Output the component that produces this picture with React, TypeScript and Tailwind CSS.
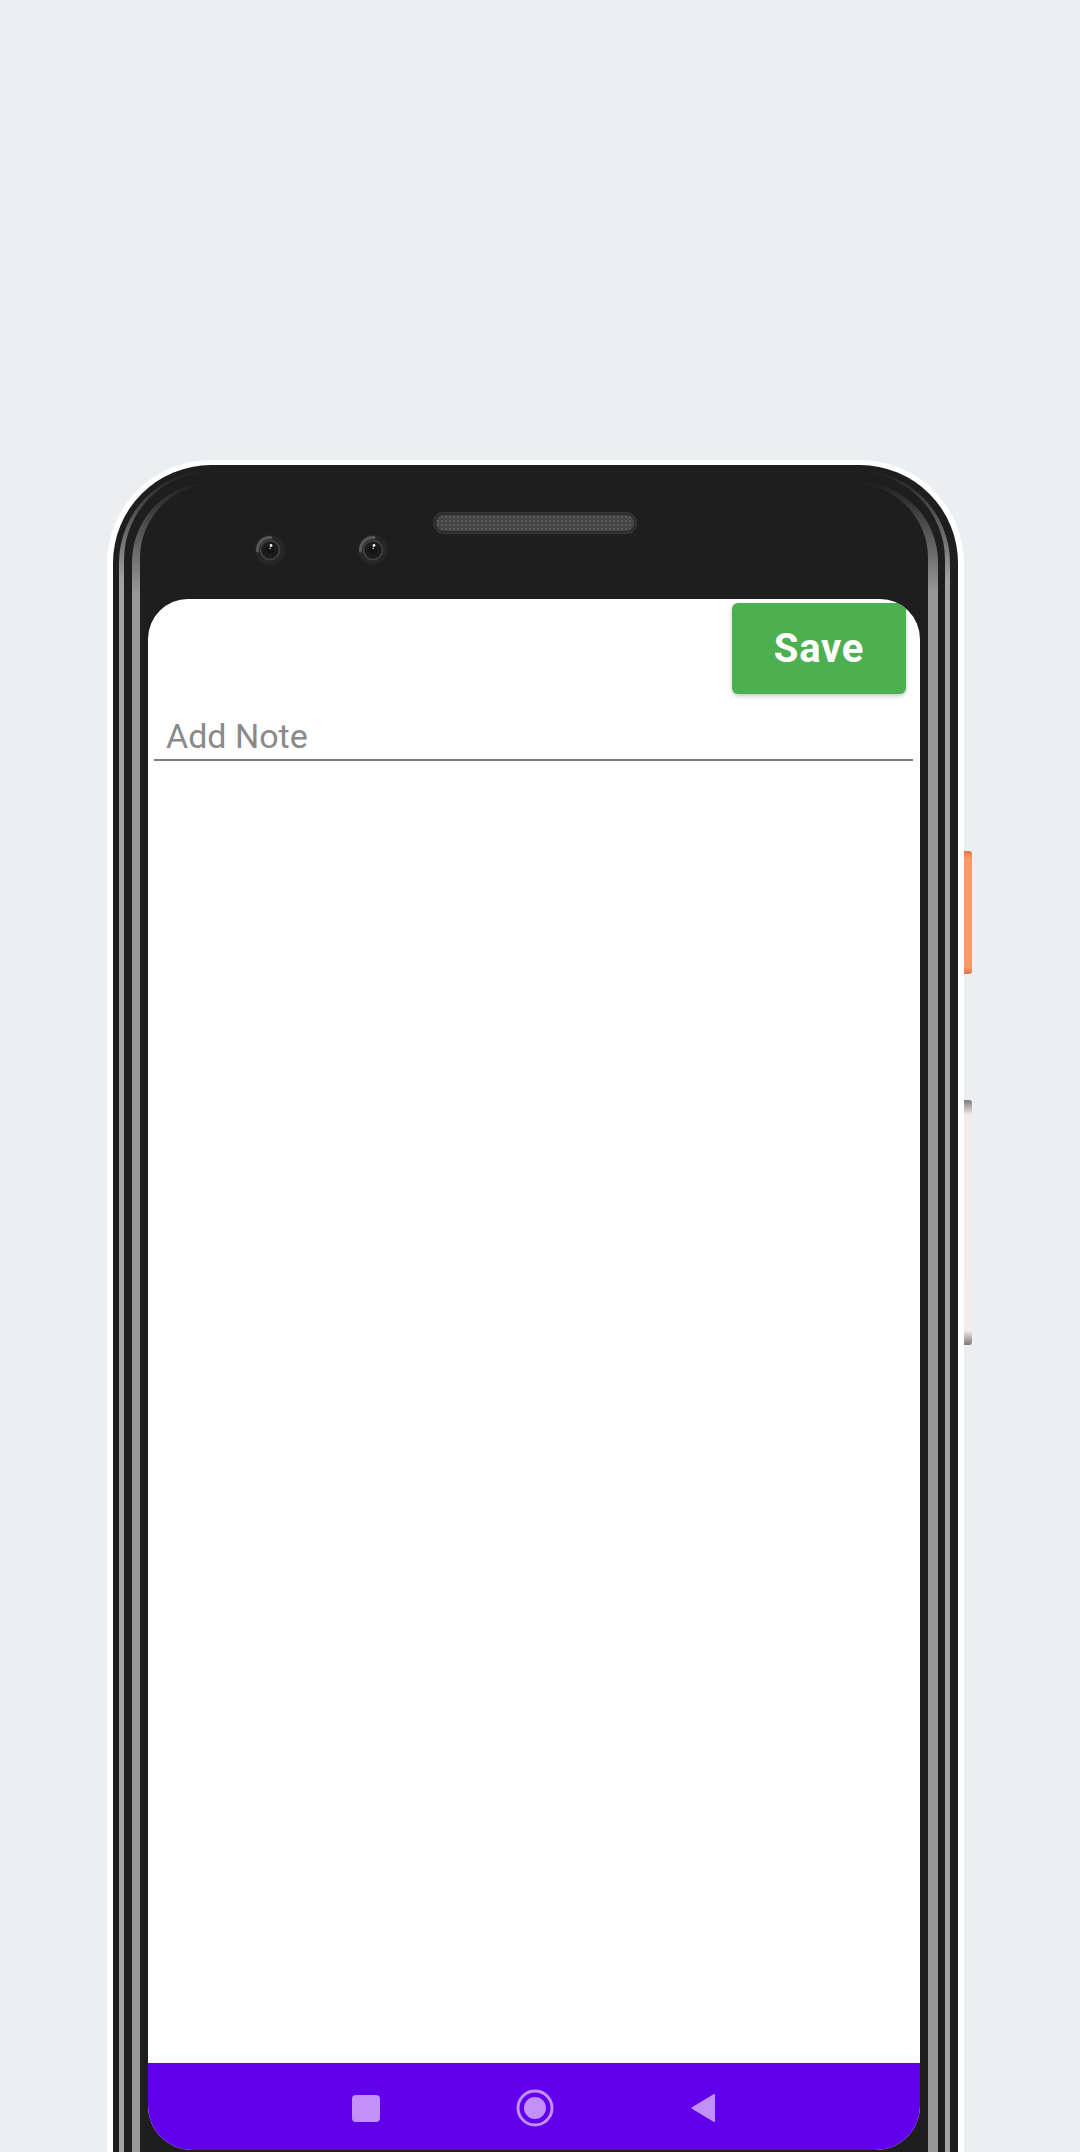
import React from "react";

function Camera() {
  return (
    <svg width="32" height="32" viewBox="0 0 32 32">
      <circle cx="16" cy="16" r="15" fill="#262626" />
      <path d="M3.5 17 A12.5 12.5 0 0 1 17 3.5" stroke="#575757" strokeWidth="3" fill="none" strokeLinecap="round" />
      <circle cx="16" cy="16" r="9.5" fill="#1c1c1c" stroke="#444444" strokeWidth="1.6" />
      <circle cx="16" cy="16" r="4" fill="#141414" />
      <circle cx="17" cy="11.5" r="1.4" fill="#ebebeb" />
      <circle cx="16.2" cy="14.3" r="0.9" fill="#a8a8a8" />
    </svg>
  );
}

function NavBar() {
  return (
    <div className="flex h-[87px] items-center justify-center gap-[136px] bg-[#6200ee] pt-[3px]">
      <div className="h-[27px] w-[28px] rounded-[4px] bg-[#c191f7]" />
      <svg width="38" height="38" viewBox="0 0 38 38">
        <circle cx="19" cy="19" r="17" fill="none" stroke="#c191f7" strokeWidth="3" />
        <circle cx="19" cy="19" r="11" fill="#c191f7" />
      </svg>
      <svg width="26" height="30" viewBox="0 0 26 30">
        <polygon points="24,2 24,28 2.5,15" fill="#c191f7" stroke="#c191f7" strokeWidth="2" strokeLinejoin="round" />
      </svg>
    </div>
  );
}

export default function App() {
  return (
    <div className="h-[2152px] w-[1080px] overflow-hidden bg-[#eceff1] pl-[107px] pt-[460px] font-['Roboto',sans-serif]">
      <div className="relative w-[857px] rounded-t-[104px] bg-white px-[6px] pt-[5px]">
        {/* side buttons */}
        <div className="absolute left-full top-[391px] h-[123px] w-[8px] rounded-r-[3px] bg-[linear-gradient(180deg,#d9784a_0%,#ff9966_6%,#ff9966_94%,#d9784a_100%)]" />
        <div className="absolute left-full top-[640px] h-[245px] w-[8px] rounded-r-[3px] bg-[linear-gradient(180deg,#7e7979_0%,#f1ecec_6%,#f3eeee_94%,#7e7979_100%)]" />

        <div className="rounded-t-[98px] bg-[#1e1e1e] pl-[6px] pr-[8px] pt-[5px]">
          <div className="rounded-t-[93px] bg-[linear-gradient(180deg,#1e1e1e_0px,#a2a2a2_110px)] px-[5px] pt-[2px]">
            <div className="rounded-t-[88px] bg-[#1e1e1e] pl-[8px] pr-[7px] pt-[10px]">
              <div className="rounded-t-[80px] bg-[linear-gradient(180deg,#1e1e1e_0px,#979797_110px)] pl-[8px] pr-[10px] pt-[2px]">
                <div className="rounded-t-[74px] bg-[#1e1e1e] px-[8px] pb-[40px]">
                  {/* top bezel */}
                  <div className="flex h-[115px] items-start pl-[106px]">
                    <div className="mt-[50px]">
                      <Camera />
                    </div>
                    <div className="ml-[71px] mt-[50px]">
                      <Camera />
                    </div>
                    <div className="ml-[45px] mt-[29px] h-[20px] w-[202px] rounded-full border-2 border-[#2c2c2c] bg-[#454545] bg-[radial-gradient(circle,#5a5a5a_0.8px,transparent_1px)] bg-[length:4px_4px] shadow-[0_0_0_1px_#3a3a3a]" />
                  </div>

                  {/* screen */}
                  <div className="flex h-[1551px] w-[772px] flex-col overflow-hidden rounded-t-[40px] rounded-b-[44px] bg-white">
                    <div className="flex flex-1 flex-col">
                      <div className="flex justify-end pr-[14px] pt-[4px]">
                        <button
                          type="button"
                          className="h-[91px] w-[174px] rounded-[6px] bg-[#4caf50] text-[40px] font-bold tracking-[0.02em] text-white shadow-[0_2px_4px_rgba(0,0,0,0.22)]"
                        >
                          Save
                        </button>
                      </div>
                      <div className="ml-[6px] mr-[7px] mt-[23px] border-b-2 border-[#7b7b7b] pb-[3px] pl-[12px] text-[34px] leading-[39px] text-[#8a8a8a]">
                        Add Note
                      </div>
                    </div>
                    <NavBar />
                  </div>
                </div>
              </div>
            </div>
          </div>
        </div>
      </div>
    </div>
  );
}
